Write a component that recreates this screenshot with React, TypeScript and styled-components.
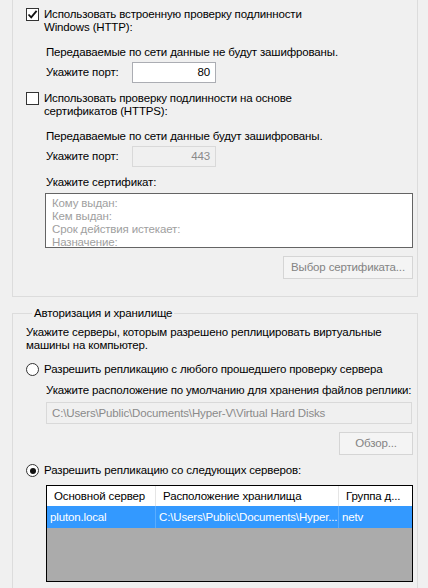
import React from 'react';
import styled, { createGlobalStyle } from 'styled-components';

const GlobalStyle = createGlobalStyle`
  html, body {
    margin: 0;
    padding: 0;
    background: #f0f0f0;
  }
  body {
    font-family: 'Liberation Sans', Arial, sans-serif;
    font-size: 11.5px;
    letter-spacing: -0.15px;
    line-height: 13px;
    color: #000;
  }
`;

const Page = styled.div`
  width: 428px;
  height: 588px;
  overflow: hidden;
  box-sizing: border-box;
  padding: 0 11px 0 12px;
  background: #f0f0f0;
`;

const Group = styled.fieldset<{ $cut?: boolean }>`
  margin: ${(p) => (p.$cut ? '0' : '10px 0 0')};
  min-width: 0;
  box-sizing: border-box;
  width: 406px;
  border: 1px solid #dcdcdc;
  border-top: ${(p) => (p.$cut ? 'none' : '1px solid #dcdcdc')};
  padding: ${(p) => (p.$cut ? '8px 4px 17px 13px' : '6px 4px 40px 13px')};
  display: flex;
  flex-direction: column;
`;

const Legend = styled.legend`
  margin-left: 6px;
  padding: 0 2px;
  line-height: 13px;
`;

const OptionRow = styled.label<{ $mt?: number }>`
  display: flex;
  align-items: flex-start;
  gap: 5px;
  margin-top: ${(p) => p.$mt ?? 0}px;
  white-space: nowrap;
`;

const CheckBox = styled.span`
  flex: none;
  width: 13px;
  height: 13px;
  box-sizing: border-box;
  border: 1px solid #333;
  background: #fff;
  display: flex;
  align-items: center;
  justify-content: center;
`;

const Radio = styled.span<{ $checked?: boolean }>`
  flex: none;
  width: 13px;
  height: 13px;
  box-sizing: border-box;
  border: 1px solid #333;
  border-radius: 50%;
  background: #fff;
  display: flex;
  align-items: center;
  justify-content: center;

  &::after {
    content: '';
    width: 6px;
    height: 6px;
    border-radius: 50%;
    background: ${(p) => (p.$checked ? '#111' : 'transparent')};
  }
`;

const Text = styled.div<{ $mt?: number; $indent?: boolean }>`
  margin-top: ${(p) => p.$mt ?? 0}px;
  margin-left: ${(p) => (p.$indent ? 20 : 0)}px;
  white-space: nowrap;
`;

const PortRow = styled.div<{ $mt?: number }>`
  display: flex;
  align-items: center;
  margin-top: ${(p) => p.$mt ?? 0}px;
  margin-left: 20px;
`;

const PortLabel = styled.span`
  width: 86px;
`;

const Input = styled.div<{ $disabled?: boolean; $right?: boolean; $width?: string; $h?: number }>`
  box-sizing: border-box;
  width: ${(p) => p.$width ?? '84px'};
  height: ${(p) => p.$h ?? 21}px;
  border: 1px solid ${(p) => (p.$disabled ? '#d9d9d9' : '#abadb3')};
  background: ${(p) => (p.$disabled ? '#f0f0f0' : '#fff')};
  color: ${(p) => (p.$disabled ? '#8a8a8a' : '#000')};
  display: flex;
  align-items: center;
  justify-content: ${(p) => (p.$right ? 'flex-end' : 'flex-start')};
  padding: 0 5px 0 5px;
  white-space: nowrap;
  overflow: hidden;
`;

const CertBox = styled.div`
  box-sizing: border-box;
  margin: 4px 0 0 19px;
  height: 55px;
  border: 1px solid #646464;
  background: #fff;
  padding: 3px 6px;
  color: #a0a0a0;
`;

const Button = styled.div<{ $width: number; $mt?: number }>`
  align-self: flex-end;
  box-sizing: border-box;
  width: ${(p) => p.$width}px;
  height: 23px;
  margin-top: ${(p) => p.$mt ?? 8}px;
  border: 1px solid #d5d5d5;
  background: #f4f4f4;
  color: #838383;
  display: flex;
  align-items: center;
  justify-content: center;
  white-space: nowrap;
`;

const WideInput = styled(Input)`
  margin: 5px 0 0 20px;
`;

const Table = styled.div`
  box-sizing: border-box;
  margin: 8px 0 0 20px;
  height: 97px;
  border: 1px solid #000;
  background: #ababab;
  display: flex;
  flex-direction: column;
`;

const TableRow = styled.div<{ $header?: boolean }>`
  display: grid;
  grid-template-columns: 109px 183px 1fr;
  height: ${(p) => (p.$header ? 20 : 22)}px;
  background: ${(p) => (p.$header ? '#fff' : '#3399ff')};
  color: ${(p) => (p.$header ? '#000' : '#fff')};
`;

const Cell = styled.div<{ $header?: boolean; $last?: boolean }>`
  display: flex;
  align-items: center;
  padding-left: ${(p) => (p.$header ? 7 : 3)}px;
  border-right: ${(p) =>
    p.$last ? 'none' : p.$header ? '1px solid #e5e5e5' : '1px solid #5aadff'};
  white-space: nowrap;
  overflow: hidden;
`;

const Check = () => (
  <svg width="11" height="11" viewBox="0 0 11 11">
    <path d="M1.5 5.5 L4.2 8.3 L9.6 1.8" fill="none" stroke="#111" strokeWidth="1.8" />
  </svg>
);

export default function App() {
  return (
    <Page>
      <GlobalStyle />
      <Group $cut>
        <OptionRow>
          <CheckBox>
            <Check />
          </CheckBox>
          <span>
            Использовать встроенную проверку подлинности
            <br />
            Windows (HTTP):
          </span>
        </OptionRow>
        <Text $indent $mt={12}>
          Передаваемые по сети данные не будут зашифрованы.
        </Text>
        <PortRow $mt={3}>
          <PortLabel>Укажите порт:</PortLabel>
          <Input $right>80</Input>
        </PortRow>
        <OptionRow $mt={9}>
          <CheckBox />
          <span>
            Использовать проверку подлинности на основе
            <br />
            сертификатов (HTTPS):
          </span>
        </OptionRow>
        <Text $indent $mt={12}>
          Передаваемые по сети данные будут зашифрованы.
        </Text>
        <PortRow $mt={3}>
          <PortLabel>Укажите порт:</PortLabel>
          <Input $right $disabled>
            443
          </Input>
        </PortRow>
        <Text $indent $mt={9}>
          Укажите сертификат:
        </Text>
        <CertBox>
          <div>Кому выдан:</div>
          <div>Кем выдан:</div>
          <div>Срок действия истекает:</div>
          <div>Назначение:</div>
        </CertBox>
        <Button $width={130}>Выбор сертификата...</Button>
      </Group>

      <Group>
        <Legend>Авторизация и хранилище</Legend>
        <Text>
          Укажите серверы, которым разрешено реплицировать виртуальные
          <br />
          машины на компьютер.
        </Text>
        <OptionRow $mt={11}>
          <Radio />
          <span>Разрешить репликацию с любого прошедшего проверку сервера</span>
        </OptionRow>
        <Text $indent $mt={8}>
          Укажите расположение по умолчанию для хранения файлов реплики:
        </Text>
        <WideInput $disabled $width="366px" $h={22}>
          C:\Users\Public\Documents\Hyper-V\Virtual Hard Disks
        </WideInput>
        <Button $width={74}>Обзор...</Button>
        <OptionRow $mt={9}>
          <Radio $checked />
          <span>Разрешить репликацию со следующих серверов:</span>
        </OptionRow>
        <Table>
          <TableRow $header>
            <Cell $header>Основной сервер</Cell>
            <Cell $header>Расположение хранилища</Cell>
            <Cell $header $last>
              Группа д...
            </Cell>
          </TableRow>
          <TableRow>
            <Cell>pluton.local</Cell>
            <Cell>C:\Users\Public\Documents\Hyper...</Cell>
            <Cell $last>netv</Cell>
          </TableRow>
        </Table>
      </Group>
    </Page>
  );
}
